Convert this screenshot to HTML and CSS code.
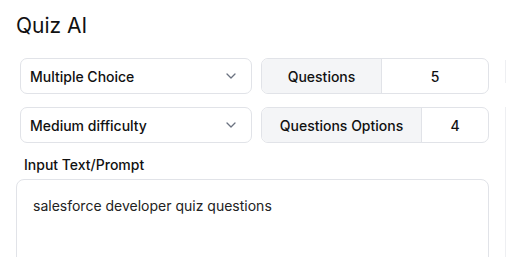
FILE: index.html
```html
<!DOCTYPE html>
<html>
<head>
<meta charset="utf-8">
<link rel="stylesheet" href="styles.css">
</head>
<body>
<div class="app">
  <h1 class="title">Quiz AI</h1>
  <div class="controls">
    <div class="row">
      <div class="select">
        <span class="select-text">Multiple Choice</span>
        <svg class="chev" width="10" height="6" viewBox="0 0 10 6"><path d="M1 1l4 4 4-4" fill="none" stroke="#6b7280" stroke-width="1.3" stroke-linecap="round" stroke-linejoin="round"/></svg>
      </div>
      <div class="group">
        <div class="group-label q1">Questions</div>
        <div class="group-value">5</div>
      </div>
    </div>
    <div class="row">
      <div class="select">
        <span class="select-text">Medium difficulty</span>
        <svg class="chev" width="10" height="6" viewBox="0 0 10 6"><path d="M1 1l4 4 4-4" fill="none" stroke="#6b7280" stroke-width="1.3" stroke-linecap="round" stroke-linejoin="round"/></svg>
      </div>
      <div class="group">
        <div class="group-label q2">Questions Options</div>
        <div class="group-value">4</div>
      </div>
    </div>
  </div>
  <div class="prompt">
    <div class="prompt-label">Input Text/Prompt</div>
    <div class="textarea">salesforce developer quiz questions</div>
  </div>
</div>
<div class="edge edge-top"></div>
<div class="edge edge-bottom"></div>
</body>
</html>
```
FILE: styles.css
```css
html, body {
  margin: 0;
  padding: 0;
  background: #ffffff;
  overflow: hidden;
}
body {
  font-family: Inter, "Noto Sans", sans-serif;
  color: #111827;
  width: 506px;
  height: 257px;
  position: relative;
}
.app {
  box-sizing: border-box;
  height: 257px;
  overflow: hidden;
  padding: 12px 17px 0 16px;
}
.title {
  margin: 0;
  font-size: 21px;
  line-height: 28px;
  font-weight: 400;
  color: #111111;
}
.controls {
  margin-top: 18px;
  padding-left: 4px;
  display: flex;
  flex-direction: column;
  gap: 13px;
}
.row {
  display: flex;
  gap: 9px;
  height: 36px;
}
.select {
  width: 232px;
  box-sizing: border-box;
  border: 1px solid #e1e3e8;
  border-radius: 7px;
  display: flex;
  align-items: center;
  justify-content: space-between;
  padding: 0 15px 0 9px;
}
.select-text {
  font-size: 14px;
  font-weight: 500;
  color: #111111;
}
.chev {
  display: block;
}
.group {
  flex: 1;
  display: flex;
  box-sizing: border-box;
  border: 1px solid #e1e3e8;
  border-radius: 7px;
  overflow: hidden;
}
.group-label {
  background: #f4f5f7;
  border-right: 1px solid #e1e3e8;
  display: flex;
  align-items: center;
  justify-content: center;
  font-size: 14px;
  font-weight: 500;
  color: #111111;
}
.q1 { width: 119px; }
.q2 { width: 159px; }
.group-value {
  flex: 1;
  display: flex;
  align-items: center;
  justify-content: center;
  font-size: 14px;
  font-weight: 500;
  color: #111111;
}
.prompt {
  margin-top: 13px;
}
.prompt-label {
  padding-left: 8px;
  margin-bottom: 5px;
  font-size: 14px;
  line-height: 18px;
  font-weight: 500;
  color: #111111;
}
.textarea {
  box-sizing: border-box;
  height: 100px;
  border: 1px solid #e1e3e8;
  border-radius: 8px;
  padding: 16px 16px;
  font-size: 14px;
  line-height: 20px;
  color: #222222;
}
.edge {
  position: absolute;
  right: 0;
  width: 1px;
  background: #eeeff2;
}
.edge-top {
  top: 60px;
  height: 23px;
}
.edge-bottom {
  top: 107px;
  bottom: 0;
}
```
